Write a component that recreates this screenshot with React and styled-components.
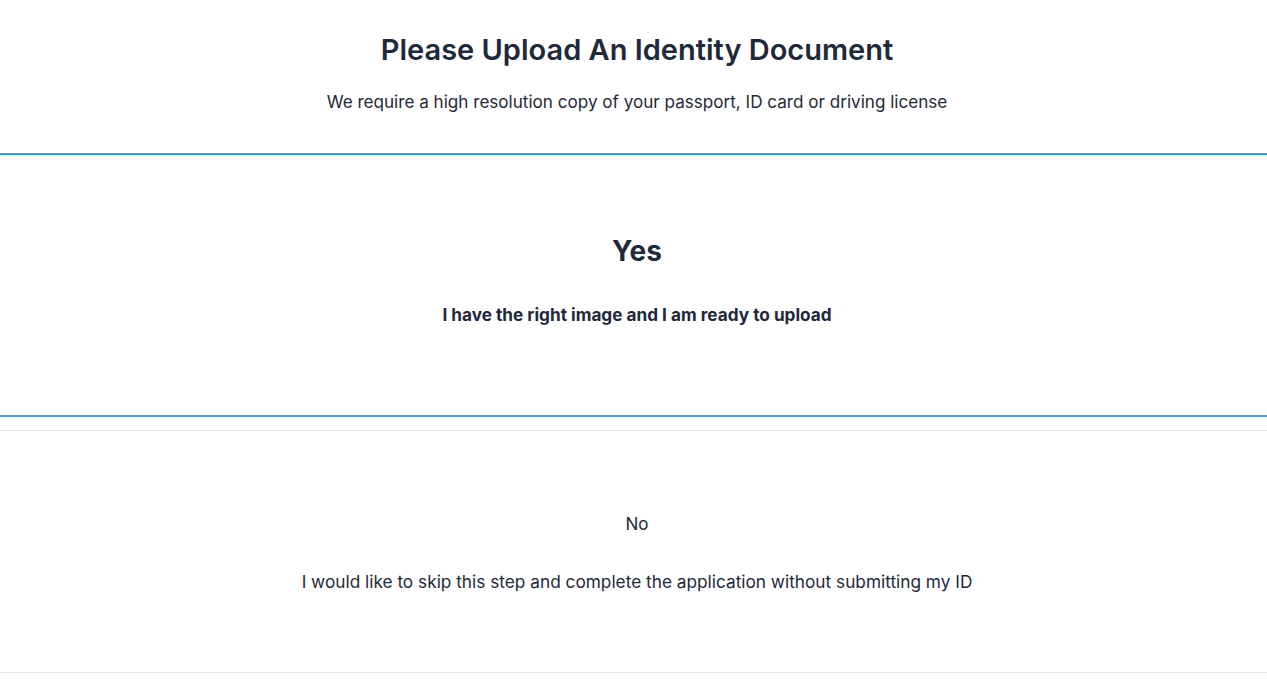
import styled, { createGlobalStyle } from 'styled-components'

const GlobalStyle = createGlobalStyle`
  body {
    margin: 0;
    background: #ffffff;
    font-family: Inter, "Noto Sans", sans-serif;
    color: #1e293b;
  }
`;

const Page = styled.div`
  display: flex;
  flex-direction: column;
`;

const Header = styled.header`
  display: flex;
  flex-direction: column;
  align-items: center;
  padding: 31px 0 39px 7px;
`;

const Title = styled.h1`
  margin: 0;
  font-size: 29px;
  line-height: 38px;
  font-weight: 600;
  color: #1e293b;
`;

const Subtitle = styled.p`
  margin: 21px 0 0 0;
  font-size: 17.1px;
  line-height: 24px;
  color: #1f2937;
`;

const Choice = styled.button`
  display: flex;
  flex-direction: column;
  align-items: center;
  width: 100%;
  height: ${({ $height }) => $height}px;
  padding: ${({ $pad }) => $pad}px 0 0 7px;
  margin-bottom: ${({ $gap }) => $gap || 0}px;
  background: #ffffff;
  border: 0;
  border-top: ${({ $active }) => ($active ? '2px solid #1ea7da' : '1px solid #e5e7eb')};
  border-bottom: ${({ $active }) => ($active ? '2px solid #4aa3c9' : '1px solid #e5e7eb')};
  font-family: inherit;
  color: #1e293b;
  cursor: pointer;
  box-sizing: border-box;
`;

const ChoiceTitle = styled.span`
  font-size: ${({ $active }) => ($active ? '28px' : '17px')};
  font-weight: ${({ $active }) => ($active ? 700 : 400)};
  line-height: ${({ $active }) => ($active ? '40px' : '24px')};
`;

const ChoiceText = styled.span`
  margin-top: ${({ $active }) => ($active ? '32px' : '34px')};
  font-size: ${({ $active }) => ($active ? '17.2px' : '17.25px')};
  line-height: 24px;
  font-weight: ${({ $active }) => ($active ? 700 : 400)};
`;

const App = () => {
  return (
    <>
      <GlobalStyle />
      <Page>
        <Header>
          <Title>Please Upload An Identity Document</Title>
          <Subtitle>We require a high resolution copy of your passport, ID card or driving license</Subtitle>
        </Header>
        <Choice $active $height={264} $pad={76} $gap={13}>
          <ChoiceTitle $active>Yes</ChoiceTitle>
          <ChoiceText $active>I have the right image and I am ready to upload</ChoiceText>
        </Choice>
        <Choice $height={243} $pad={81}>
          <ChoiceTitle>No</ChoiceTitle>
          <ChoiceText>I would like to skip this step and complete the application without submitting my ID</ChoiceText>
        </Choice>
      </Page>
    </>
  )
}

export default App
